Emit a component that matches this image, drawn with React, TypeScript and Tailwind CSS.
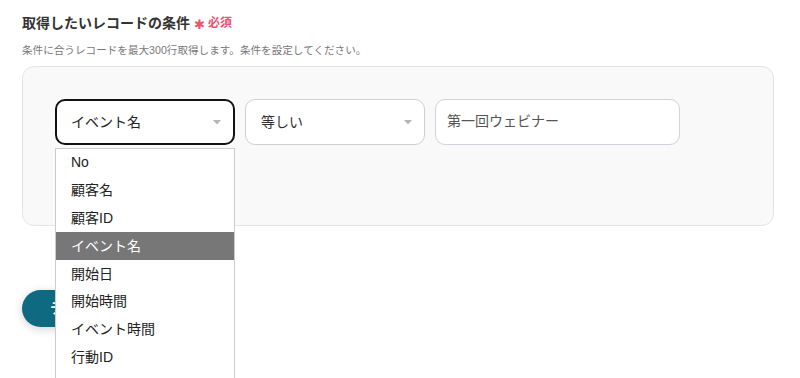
import React from "react";

const items = ["No", "顧客名", "顧客ID", "イベント名", "開始日", "開始時間", "イベント時間", "行動ID"];

function Caret() {
  return (
    <svg width="8" height="5" viewBox="0 0 8 5" className="shrink-0">
      <path d="M0 0 L8 0 L4 4.5 Z" fill="#b5b5b5" />
    </svg>
  );
}

export default function App() {
  return (
    <div
      className="relative w-[800px] h-[378px] overflow-hidden bg-white pl-[22px] pr-[26px] pt-[13px]"
      style={{ fontFamily: '"Liberation Sans", "Noto Sans CJK JP", sans-serif' }}
    >
      <div className="flex items-center h-[20px]">
        <span className="text-[14px] font-bold text-[#333]">取得したいレコードの条件</span>
        <span className="ml-[4px] text-[13px] text-[#f0506e] leading-none mt-[3px]">✱</span>
        <span className="ml-[3px] text-[12px] font-bold text-[#f0506e]">必須</span>
      </div>
      <div className="mt-[10px] text-[10.6px] text-[#777] leading-[14px]">
        条件に合うレコードを最大300行取得します。条件を設定してください。
      </div>
      <div className="mt-[9px] h-[160px] rounded-[12px] border border-[#e4e4e4] bg-[#f9f9f9] pl-[32px] pt-[32px]">
        <div className="flex gap-[10px]">
          <div className="w-[180px] h-[46px] rounded-[10px] border-2 border-[#111] bg-white flex items-center justify-between pl-[14px] pr-[12px]">
            <span className="text-[14px] text-[#222]">イベント名</span>
            <Caret />
          </div>
          <div className="w-[180px] h-[46px] rounded-[10px] border border-[#cfcfcf] bg-white flex items-center justify-between pl-[15px] pr-[12px]">
            <span className="text-[14px] text-[#333]">等しい</span>
            <Caret />
          </div>
          <div className="w-[245px] h-[46px] rounded-[10px] border border-[#cfd3da] bg-white pl-[11px] pt-[9px]">
            <span className="text-[14px] text-[#555]">第一回ウェビナー</span>
          </div>
        </div>
      </div>
      <div className="mt-[64px] w-[150px] h-[37px] rounded-full bg-[#0e6a80] shadow-[0_2px_10px_rgba(0,0,0,0.18)] flex items-center pl-[28px]">
        <span className="text-[14px] font-bold text-white">テスト</span>
      </div>
      <div className="absolute left-[55px] top-[148px] w-[180px] h-[260px] border border-[#cccccc] bg-white">
        {items.map((it) => (
          <div
            key={it}
            className={
              it === "イベント名"
                ? "h-[27.8px] flex items-center pl-[15px] bg-[#777777] text-white text-[14px]"
                : "h-[27.8px] flex items-center pl-[15px] text-[#222] text-[14px]"
            }
          >
            {it}
          </div>
        ))}
      </div>
    </div>
  );
}
